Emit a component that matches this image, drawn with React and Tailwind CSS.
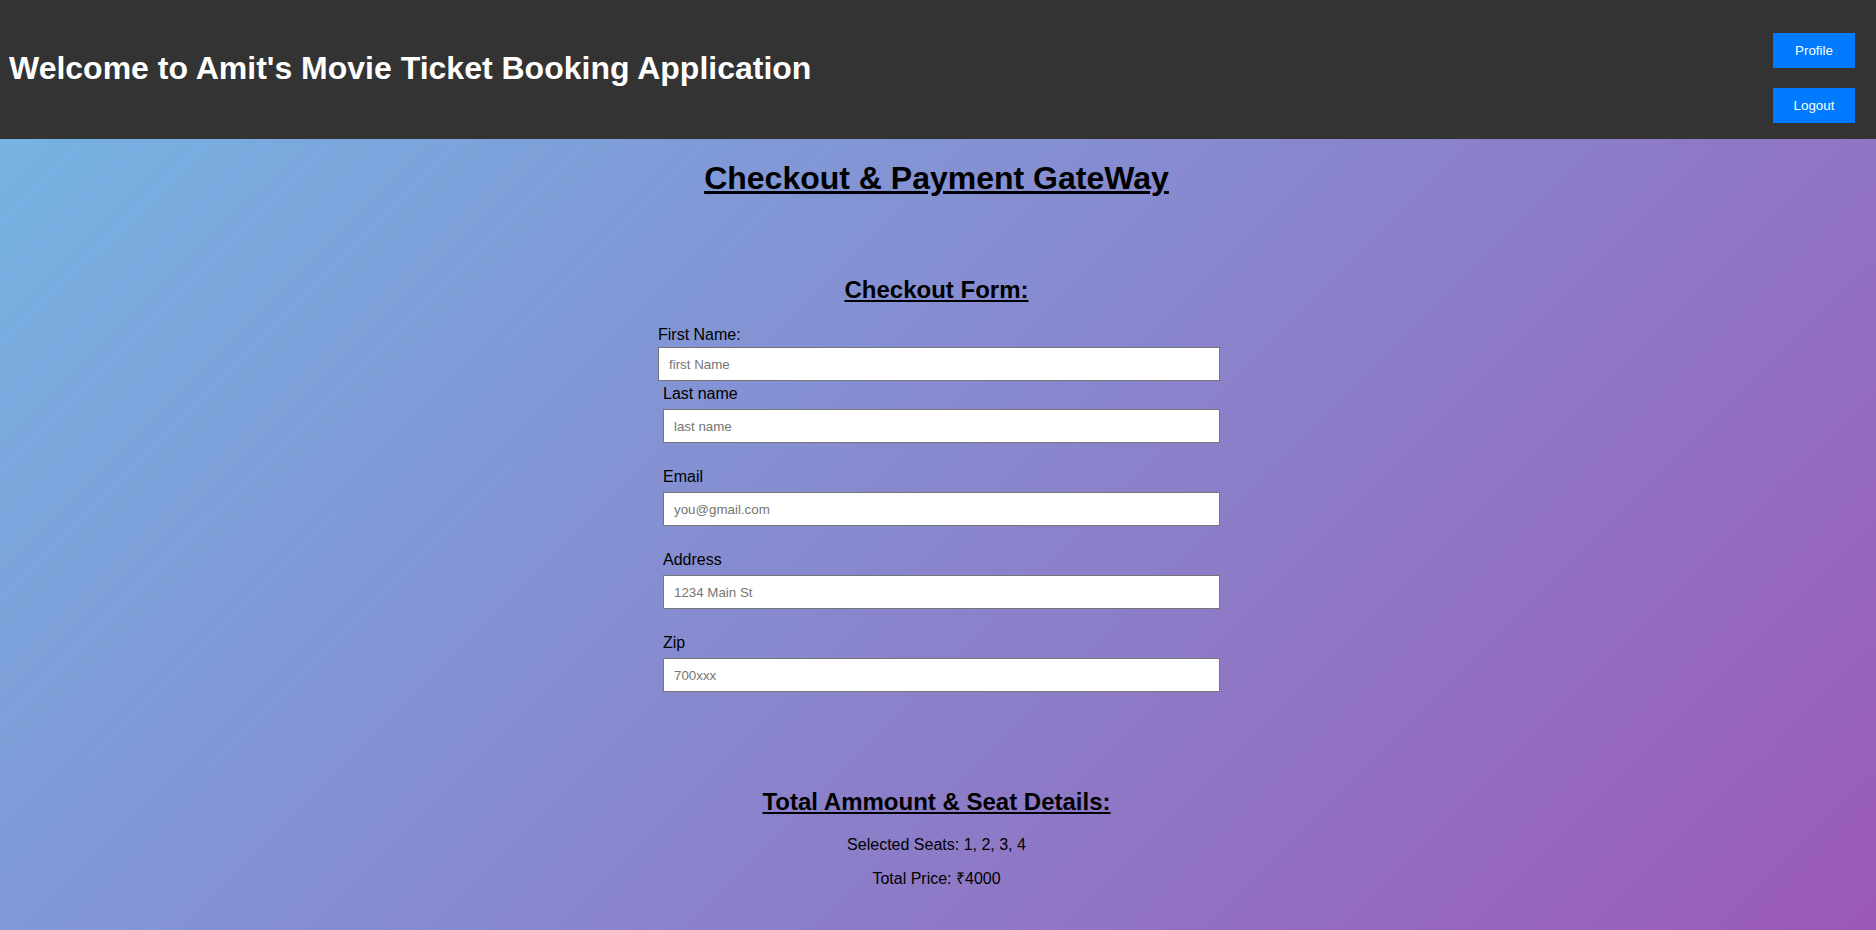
import React from "react";

function Field({ label, placeholder, first }) {
  return (
    <div className={first ? "pl-[2px]" : "pl-[7px]"}>
      <label className="block text-[16px] leading-[18px] text-black">{label}</label>
      <input
        type="text"
        placeholder={placeholder}
        className={
          (first ? "mt-[3px] " : "mt-[6px] ") +
          "block w-full h-[34px] bg-white border border-[#767676] px-[10px] text-[13.33px] text-black placeholder:text-[#757575] outline-none"
        }
      />
    </div>
  );
}

export default function App() {
  return (
    <div className="min-h-[930px] flex flex-col font-['Liberation_Sans',Arial,sans-serif]">
      <header className="h-[139px] shrink-0 bg-[#333333] flex items-center justify-between">
        <h1 className="pl-[9px] mb-[2px] text-[32px] leading-[37px] font-bold text-white">
          Welcome to Amit's Movie Ticket Booking Application
        </h1>
        <div className="flex flex-col gap-[20px] mt-[17px] mr-[21px]">
          <button className="w-[82px] h-[35px] bg-[#007bff] text-white text-[13.33px]">
            Profile
          </button>
          <button className="w-[82px] h-[35px] bg-[#007bff] text-white text-[13.33px]">
            Logout
          </button>
        </div>
      </header>

      <main className="flex-1 bg-linear-135/srgb from-[#76b3e3] to-[#9b59b6] text-black">
        <h1 className="pt-[21px] pr-[3px] text-center text-[32px] leading-[37px] font-bold underline">
          Checkout &amp; Payment GateWay
        </h1>
        <h2 className="mt-[79px] pr-[3px] text-center text-[24px] leading-[28px] font-bold underline">
          Checkout Form:
        </h2>

        <form className="mt-[22px] mx-auto w-[564px] flex flex-col">
          <Field first label="First Name:" placeholder="first Name" />
          <div className="mt-[4px]">
            <Field label="Last name" placeholder="last name" />
          </div>
          <div className="mt-[25px]">
            <Field label="Email" placeholder="you@gmail.com" />
          </div>
          <div className="mt-[25px]">
            <Field label="Address" placeholder="1234 Main St" />
          </div>
          <div className="mt-[25px]">
            <Field label="Zip" placeholder="700xxx" />
          </div>
        </form>

        <h2 className="mt-[96px] pr-[3px] text-center text-[24px] leading-[28px] font-bold underline">
          Total Ammount &amp; Seat Details:
        </h2>
        <p className="mt-[20px] pr-[3px] text-center text-[16px] leading-[18px]">
          Selected Seats: 1, 2, 3, 4
        </p>
        <p className="mt-[16px] mb-[16px] pr-[3px] text-center text-[16px] leading-[18px]">
          Total Price: ₹4000
        </p>
      </main>
    </div>
  );
}
